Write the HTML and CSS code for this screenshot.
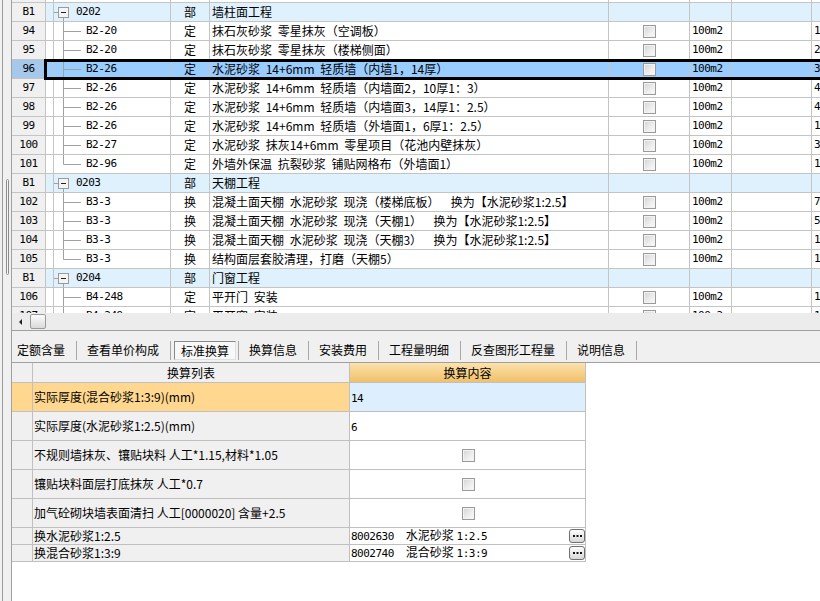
FILE: index.html
```html
<!DOCTYPE html>
<html lang="zh-CN">
<head>
<meta charset="utf-8">
<title>标准换算</title>
<link rel="stylesheet" href="styles.css">
</head>
<body>
<div class="app">
  <div class="lstrip"><div class="rail"><div class="grip"></div></div></div>
  <div class="main">
    <div class="gridwrap">
      <div class="grid">
        <div class="row"><div class="c rn"></div><div class="c tr"></div><div class="c code"></div><div class="c ty"></div><div class="c nm"></div><div class="c ck"></div><div class="c un"></div><div class="c q"></div><div class="c l"></div></div>

        <div class="row grp"><div class="c rn m">B1</div><div class="c tr"></div><div class="c code"><svg class="tg" width="22" height="18" viewBox="0 0 22 18"><path class="ln" d="M0 9.5H4M9.5 14V18"/><rect x="4.5" y="4.5" width="10" height="10" class="bx"/><path class="mn" d="M7 9.5H12"/></svg><span class="m">0202</span></div><div class="c ty">部</div><div class="c nm">墙柱面工程</div><div class="c ck"></div><div class="c un"></div><div class="c q"></div><div class="c l"></div></div>

        <div class="row"><div class="c rn m">94</div><div class="c tr"></div><div class="c code"><svg class="tl" width="32" height="18" viewBox="0 0 32 18"><path d="M9.5 0V18M9.5 9.5H27"/></svg><span class="m">B2-20</span></div><div class="c ty">定</div><div class="c nm">抹石灰砂浆 零星抹灰（空调板）</div><div class="c ck"><i class="cb"></i></div><div class="c un m">100m2</div><div class="c q"></div><div class="c l m">1</div></div>

        <div class="row"><div class="c rn m">95</div><div class="c tr"></div><div class="c code"><svg class="tl" width="32" height="18" viewBox="0 0 32 18"><path d="M9.5 0V18M9.5 9.5H27"/></svg><span class="m">B2-20</span></div><div class="c ty">定</div><div class="c nm">抹石灰砂浆 零星抹灰（楼梯侧面）</div><div class="c ck"><i class="cb"></i></div><div class="c un m">100m2</div><div class="c q"></div><div class="c l m">2</div></div>

        <div class="row sel"><div class="c rn m">96</div><div class="c tr"></div><div class="c code"><svg class="tl" width="32" height="18" viewBox="0 0 32 18"><path d="M9.5 0V18M9.5 9.5H27"/></svg><span class="m">B2-26</span></div><div class="c ty">定</div><div class="c nm">水泥砂浆 14+6mm 轻质墙（内墙1，14厚）</div><div class="c ck"><i class="cb"></i></div><div class="c un m">100m2</div><div class="c q"></div><div class="c l m">3</div></div>

        <div class="row"><div class="c rn m">97</div><div class="c tr"></div><div class="c code"><svg class="tl" width="32" height="18" viewBox="0 0 32 18"><path d="M9.5 0V18M9.5 9.5H27"/></svg><span class="m">B2-26</span></div><div class="c ty">定</div><div class="c nm">水泥砂浆 14+6mm 轻质墙（内墙面2，10厚1：3）</div><div class="c ck"><i class="cb"></i></div><div class="c un m">100m2</div><div class="c q"></div><div class="c l m">4</div></div>

        <div class="row"><div class="c rn m">98</div><div class="c tr"></div><div class="c code"><svg class="tl" width="32" height="18" viewBox="0 0 32 18"><path d="M9.5 0V18M9.5 9.5H27"/></svg><span class="m">B2-26</span></div><div class="c ty">定</div><div class="c nm">水泥砂浆 14+6mm 轻质墙（内墙面3，14厚1：2.5）</div><div class="c ck"><i class="cb"></i></div><div class="c un m">100m2</div><div class="c q"></div><div class="c l m">4</div></div>

        <div class="row"><div class="c rn m">99</div><div class="c tr"></div><div class="c code"><svg class="tl" width="32" height="18" viewBox="0 0 32 18"><path d="M9.5 0V18M9.5 9.5H27"/></svg><span class="m">B2-26</span></div><div class="c ty">定</div><div class="c nm">水泥砂浆 14+6mm 轻质墙（外墙面1，6厚1：2.5）</div><div class="c ck"><i class="cb"></i></div><div class="c un m">100m2</div><div class="c q"></div><div class="c l m">1</div></div>

        <div class="row"><div class="c rn m">100</div><div class="c tr"></div><div class="c code"><svg class="tl" width="32" height="18" viewBox="0 0 32 18"><path d="M9.5 0V18M9.5 9.5H27"/></svg><span class="m">B2-27</span></div><div class="c ty">定</div><div class="c nm">水泥砂浆 抹灰14+6mm 零星项目（花池内壁抹灰）</div><div class="c ck"><i class="cb"></i></div><div class="c un m">100m2</div><div class="c q"></div><div class="c l m">3</div></div>

        <div class="row"><div class="c rn m">101</div><div class="c tr"></div><div class="c code"><svg class="tl" width="32" height="18" viewBox="0 0 32 18"><path d="M9.5 0V9.5H27"/></svg><span class="m">B2-96</span></div><div class="c ty">定</div><div class="c nm">外墙外保温 抗裂砂浆 铺贴网格布（外墙面1）</div><div class="c ck"><i class="cb"></i></div><div class="c un m">100m2</div><div class="c q"></div><div class="c l m">1</div></div>

        <div class="row grp"><div class="c rn m">B1</div><div class="c tr"></div><div class="c code"><svg class="tg" width="22" height="18" viewBox="0 0 22 18"><path class="ln" d="M0 9.5H4M9.5 14V18"/><rect x="4.5" y="4.5" width="10" height="10" class="bx"/><path class="mn" d="M7 9.5H12"/></svg><span class="m">0203</span></div><div class="c ty">部</div><div class="c nm">天棚工程</div><div class="c ck"></div><div class="c un"></div><div class="c q"></div><div class="c l"></div></div>

        <div class="row"><div class="c rn m">102</div><div class="c tr"></div><div class="c code"><svg class="tl" width="32" height="18" viewBox="0 0 32 18"><path d="M9.5 0V18M9.5 9.5H27"/></svg><span class="m">B3-3</span></div><div class="c ty">换</div><div class="c nm">混凝土面天棚 水泥砂浆 现浇（楼梯底板）  换为【水泥砂浆1:2.5】</div><div class="c ck"><i class="cb"></i></div><div class="c un m">100m2</div><div class="c q"></div><div class="c l m">7</div></div>

        <div class="row"><div class="c rn m">103</div><div class="c tr"></div><div class="c code"><svg class="tl" width="32" height="18" viewBox="0 0 32 18"><path d="M9.5 0V18M9.5 9.5H27"/></svg><span class="m">B3-3</span></div><div class="c ty">换</div><div class="c nm">混凝土面天棚 水泥砂浆 现浇（天棚1）  换为【水泥砂浆1:2.5】</div><div class="c ck"><i class="cb"></i></div><div class="c un m">100m2</div><div class="c q"></div><div class="c l m">5</div></div>

        <div class="row"><div class="c rn m">104</div><div class="c tr"></div><div class="c code"><svg class="tl" width="32" height="18" viewBox="0 0 32 18"><path d="M9.5 0V18M9.5 9.5H27"/></svg><span class="m">B3-3</span></div><div class="c ty">换</div><div class="c nm">混凝土面天棚 水泥砂浆 现浇（天棚3）  换为【水泥砂浆1:2.5】</div><div class="c ck"><i class="cb"></i></div><div class="c un m">100m2</div><div class="c q"></div><div class="c l m">1</div></div>

        <div class="row"><div class="c rn m">105</div><div class="c tr"></div><div class="c code"><svg class="tl" width="32" height="18" viewBox="0 0 32 18"><path d="M9.5 0V9.5H27"/></svg><span class="m">B3-3</span></div><div class="c ty">换</div><div class="c nm">结构面层套胶清理，打磨（天棚5）</div><div class="c ck"><i class="cb"></i></div><div class="c un m">100m2</div><div class="c q"></div><div class="c l m">1</div></div>

        <div class="row grp"><div class="c rn m">B1</div><div class="c tr"></div><div class="c code"><svg class="tg" width="22" height="18" viewBox="0 0 22 18"><path class="ln" d="M0 9.5H4M9.5 14V18"/><rect x="4.5" y="4.5" width="10" height="10" class="bx"/><path class="mn" d="M7 9.5H12"/></svg><span class="m">0204</span></div><div class="c ty">部</div><div class="c nm">门窗工程</div><div class="c ck"></div><div class="c un"></div><div class="c q"></div><div class="c l"></div></div>

        <div class="row"><div class="c rn m">106</div><div class="c tr"></div><div class="c code"><svg class="tl" width="32" height="18" viewBox="0 0 32 18"><path d="M9.5 0V18M9.5 9.5H27"/></svg><span class="m">B4-248</span></div><div class="c ty">定</div><div class="c nm">平开门 安装</div><div class="c ck"><i class="cb"></i></div><div class="c un m">100m2</div><div class="c q"></div><div class="c l m">1</div></div>

        <div class="row"><div class="c rn m">107</div><div class="c tr"></div><div class="c code"><svg class="tl" width="32" height="18" viewBox="0 0 32 18"><path d="M9.5 0V18M9.5 9.5H27"/></svg><span class="m">B4-249</span></div><div class="c ty">定</div><div class="c nm">平开窗 安装</div><div class="c ck"><i class="cb"></i></div><div class="c un m">100m2</div><div class="c q"></div><div class="c l m">1</div></div>
      </div>
    </div>
    <div class="hscroll"><span class="arr"></span><span class="thumb"></span></div>
    <div class="tabs">
      <div class="tab first">定额含量</div><span class="sep"></span>
      <div class="tab">查看单价构成</div><span class="sep"></span>
      <div class="tab active">标准换算</div><span class="sep"></span>
      <div class="tab">换算信息</div><span class="sep"></span>
      <div class="tab">安装费用</div><span class="sep"></span>
      <div class="tab">工程量明细</div><span class="sep"></span>
      <div class="tab">反查图形工程量</div><span class="sep"></span>
      <div class="tab">说明信息</div><span class="sep"></span>
    </div>
    <div class="bottom">
      <div class="tbl">
        <div class="trow hd"><div class="tc t1"></div><div class="tc t2">换算列表</div><div class="tc t3">换算内容</div></div>
        <div class="trow tall hi"><div class="tc t1"></div><div class="tc t2">实际厚度(混合砂浆1:3:9)(mm)</div><div class="tc t3"><span class="m">14</span></div></div>
        <div class="trow tall"><div class="tc t1"></div><div class="tc t2">实际厚度(水泥砂浆1:2.5)(mm)</div><div class="tc t3"><span class="m">6</span></div></div>
        <div class="trow tall"><div class="tc t1"></div><div class="tc t2">不规则墙抹灰、镶贴块料 人工*1.15,材料*1.05</div><div class="tc t3 cc"><i class="cb"></i></div></div>
        <div class="trow tall"><div class="tc t1"></div><div class="tc t2">镶贴块料面层打底抹灰 人工*0.7</div><div class="tc t3 cc"><i class="cb"></i></div></div>
        <div class="trow tall"><div class="tc t1"></div><div class="tc t2">加气砼砌块墙表面清扫 人工[0000020] 含量+2.5</div><div class="tc t3 cc"><i class="cb"></i></div></div>
        <div class="trow short"><div class="tc t1"></div><div class="tc t2">换水泥砂浆1:2.5</div><div class="tc t3 sp"><span><span class="m">8002630</span><span class="g">水泥砂浆</span> <span class="m">1:2.5</span></span><button class="dots" type="button"><svg width="9" height="3" viewBox="0 0 9 3"><rect x="0" y="0" width="2" height="2"/><rect x="3.5" y="0" width="2" height="2"/><rect x="7" y="0" width="2" height="2"/></svg></button></div></div>
        <div class="trow short"><div class="tc t1"></div><div class="tc t2">换混合砂浆1:3:9</div><div class="tc t3 sp"><span><span class="m">8002740</span><span class="g">混合砂浆</span> <span class="m">1:3:9</span></span><button class="dots" type="button"><svg width="9" height="3" viewBox="0 0 9 3"><rect x="0" y="0" width="2" height="2"/><rect x="3.5" y="0" width="2" height="2"/><rect x="7" y="0" width="2" height="2"/></svg></button></div></div>
      </div>
    </div>
  </div>
</div>
</body>
</html>
```
FILE: styles.css
```css
* { box-sizing: border-box; }
html, body { margin: 0; padding: 0; }
body {
  width: 820px;
  height: 601px;
  overflow: hidden;
  background: #f0f0f0;
  font-family: "Noto Sans CJK SC", "Liberation Sans", sans-serif;
  font-size: 12px;
  color: #000;
}
.m { font-family: "DejaVu Sans Mono", "Liberation Mono", monospace; font-size: 11px; letter-spacing: -0.5px; }

.app { display: flex; height: 601px; }
.lstrip { width: 11px; flex: none; padding-left: 2px; }
.rail { height: 100%; border-left: 1px solid #9c9c9c; padding: 179px 0 0 3px; }
.grip { width: 3px; height: 96px; border: 1px solid #8c8c8c; border-radius: 2px; background: #f7f7f7; }

.main { flex: 1; min-width: 0; display: flex; flex-direction: column; border-left: 1px solid #a0a0a0; }

/* top grid */
.gridwrap { height: 313px; overflow: hidden; background: #fff; flex: none; }
.grid { margin-top: -16px; width: max-content; }
.row { display: flex; height: 19px; }
.c {
  flex: none;
  height: 19px;
  border-right: 1px solid #c4c4c4;
  border-bottom: 1px solid #c4c4c4;
  line-height: 18px;
  white-space: pre;
  overflow: hidden;
}
.rn { width: 34px; background: #f0f0f0; text-align: center; }
.tr { width: 8px; }
.code { width: 117px; display: flex; align-items: center; }
.ty { width: 39px; text-align: center; }
.nm { width: 399px; padding-left: 2px; word-spacing: 3px; }
.ck { width: 81px; display: flex; align-items: center; justify-content: center; }
.un { width: 42px; padding-left: 2px; }
.q { width: 80px; }
.l { width: 40px; padding-left: 2px; }

.tl, .tg { flex: none; display: block; }
.tl path, .tg .ln { stroke: #a0a0a0; stroke-width: 1; fill: none; }
.tg .bx { fill: #f4f4f4; stroke: #9a9a9a; }
.tg .mn { stroke: #222; stroke-width: 1; }

.grp .c:not(.rn) { background: #dff1fc; }

.sel { position: relative; z-index: 1; }
.sel .rn { background: #a6c8ea; }
.sel .c:not(.rn) { background: #99ccff; }
.sel .nm { background: #deeffe; }
.sel::after {
  content: "";
  position: absolute;
  left: 32px;
  right: -40px;
  top: -1px;
  bottom: -1px;
  border: 3px solid #000;
  pointer-events: none;
}

.cb {
  display: block;
  width: 13px;
  height: 13px;
  border: 1px solid #9a9a9a;
  background: linear-gradient(135deg, #d4d4d4 0%, #eeeeee 60%, #fbfbfb 100%);
  box-shadow: inset 0 0 0 1px #f2f2f2;
}

/* horizontal scrollbar */
.hscroll {
  flex: none;
  height: 18px;
  background: #ececec;
  border-bottom: 1px solid #a0a0a0;
  display: flex;
  align-items: center;
  padding-left: 7px;
}
.arr {
  width: 0; height: 0;
  border-top: 3px solid transparent;
  border-bottom: 3px solid transparent;
  border-right: 3px solid #222;
}
.thumb {
  margin-left: 8px;
  width: 16px;
  height: 15px;
  border: 1px solid #9a9a9a;
  border-radius: 2px;
  background: linear-gradient(#fbfbfb, #dadada);
}

/* tabs */
.tabs {
  flex: none;
  height: 31px;
  padding-top: 10px;
  display: flex;
  align-items: flex-start;
}
.tab { height: 19px; line-height: 18px; padding: 0 11px 0 10px; white-space: nowrap; }
.tab.first { padding-left: 5px; }
.tab.active {
  margin: 0 2px 0 3px;
  padding: 0 6px;
  border: 1px solid;
  border-color: #8a8a8a #e0e0e0 #e0e0e0 #8a8a8a;
  background: #f8f8f8;
}
.sep { width: 1px; height: 19px; background: #a8a8a8; flex: none; }

/* bottom table */
.bottom { flex: 1; background: #fff; border-top: 1px solid #a0a0a0; }
.tbl { width: 574px; }
.trow { display: flex; }
.tc {
  flex: none;
  border-right: 1px solid #c0c0c0;
  border-bottom: 1px solid #c0c0c0;
  white-space: nowrap;
  overflow: hidden;
}
.t1 { width: 21px; background: #f0f0f0; }
.t2 { width: 317px; background: #f0f0f0; padding-left: 1px; }
.t3 { width: 236px; padding-left: 1px; }
.hd .tc { height: 20px; line-height: 19px; text-align: center; padding-left: 0; }
.hd .t3 { background: linear-gradient(#fbe2ac, #f1c069); }
.tall .tc { height: 29px; line-height: 28px; }
.short .tc { height: 17px; line-height: 16px; }
.hi .t1, .hi .t2 { background: #ffd78e; }
.hi .t3 { background: #ddeeff; }
.cc { display: flex; align-items: center; justify-content: center; }
.sp { display: flex; align-items: center; justify-content: space-between; }
.g { margin-left: 12px; }
.dots {
  flex: none;
  width: 16px;
  height: 14px;
  margin: 0;
  padding: 0;
  border: 1px solid #707070;
  border-radius: 3px;
  background: linear-gradient(#fdfdfd, #d8d8d8);
  display: flex;
  align-items: center;
  justify-content: center;
}
.dots rect { fill: #111; }
```
